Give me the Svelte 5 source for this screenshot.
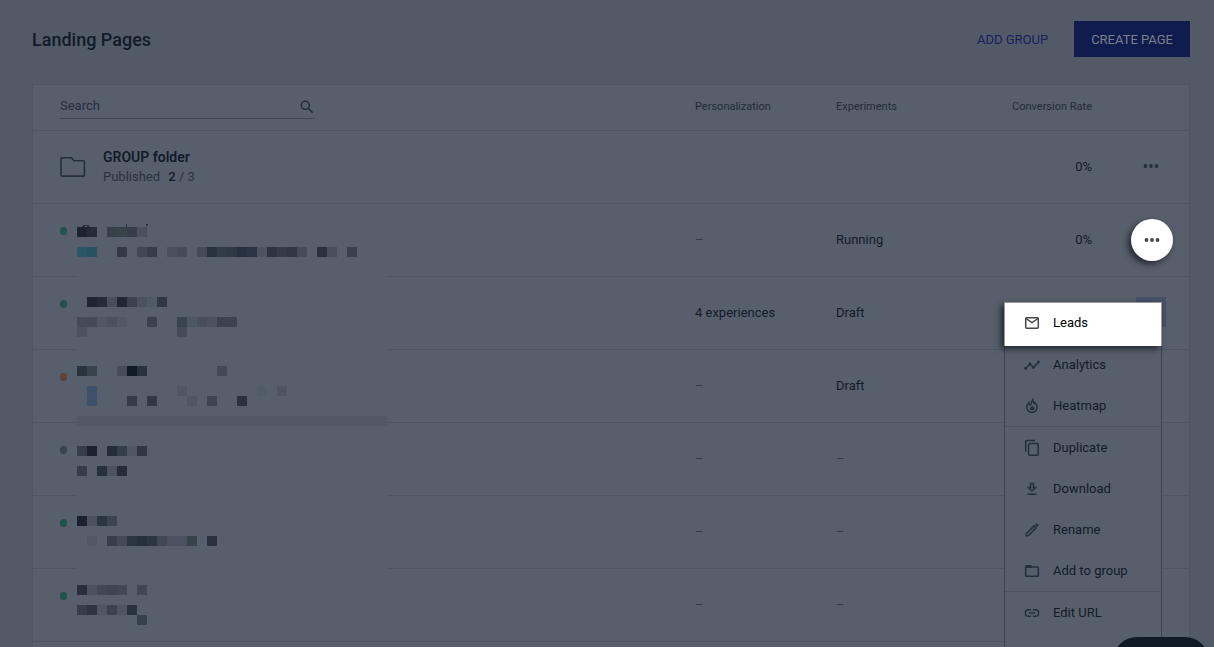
<script>
  let search = $state("");

  const pages = [
    { status: "live", personalization: "–", experiments: "Running", rate: "0%", focus: true },
    { status: "live", personalization: "4 experiences", experiments: "Draft", rate: "", active: true },
    { status: "changed", personalization: "–", experiments: "Draft", rate: "" },
    { status: "draft", personalization: "–", experiments: "–", rate: "" },
    { status: "live", personalization: "–", experiments: "–", rate: "" },
    { status: "live", personalization: "–", experiments: "–", rate: "" },
  ];

  const menu = [
    { icon: "mail", label: "Leads", focus: true },
    { icon: "chart", label: "Analytics" },
    { icon: "flame", label: "Heatmap", last: true },
    { icon: "copy", label: "Duplicate" },
    { icon: "download", label: "Download" },
    { icon: "pencil", label: "Rename" },
    { icon: "folder", label: "Add to group", last: true },
    { icon: "link", label: "Edit URL" },
  ];

  // hidden page names: top of the strip, then column + colour for every block
  const mosaic = [
    [1, "0 1d2431,1 252c38,3 374049,4 38424a,5 353e49,6 4a505d"],
    [21, "0 2d5563,1 275260,4 333947,6 414755,7 363d4b,9 4a505e,10 454b59,12 444b58,13 28323d,14 333a48,15 303745,16 27323e,17 2d3443,18 4d5360,19 2c3341,20 353c49,21 303844,22 454b59,24 2a323f,25 484e5c,27 3a404d"],
    [71, "1 1f2633,2 252c39,3 474f5b,4 202634,5 3b414f,6 4b525e,7 505a66,8 313745"],
    [91, "0 454b59,1 444a58,2 505664,3 4a505e,4 525965,7 3b414f,10 3a424f,11 4c5762,12 484e5c,13 4c5260,14 3c4250,15 3d4351"],
    [101, "0 4c525f,10 454b58"],
    [140, "0 29333e,1 38434c,4 464c59,5 101a25,6 2b323f,14 424855"],
    [160, "1 3f506a,10 505664,18 525c68,20 4e5461"],
    [170, "1 3f506a,5 353b48,7 333845,11 4f5562,13 3e4551,16 2b323f"],
    [220, "0 373e4b,1 1b212f,3 242c39,4 343f4a,5 505664,6 303643"],
    [240, "0 363c49,2 27313c,3 4c525f,4 272c39"],
    [290, "0 1b212f,1 4c5360,2 2a353f,3 3d4451"],
    [310, "1 525965,3 383e4b,4 444b57,5 2c3441,6 26303c,7 2e3542,8 424956,9 4b515e,10 4b515e,11 37424b,13 2b323f"],
    [359, "0 282f3c,1 4b535f,2 424856,3 3f4553,4 424856,6 414855"],
    [379, "0 353e49,1 2d3442,2 4f5563,3 3b424f,4 4e5461,5 2b323f"],
    [389, "6 37414b"],
  ];

  const blocks = mosaic.flatMap(([y, cells]) =>
    cells.split(",").map((cell) => {
      const [col, color] = cell.split(" ");
      return { x: col * 10, y, color: "#" + color };
    })
  );
</script>

{#snippet more(kind)}
  <button class="more {kind}" aria-label="More actions">
    <svg width="16" height="4" viewBox="0 0 16 4">
      <circle cx="2.5" cy="2" r="1.900" />
      <circle cx="8" cy="2" r="1.900" />
      <circle cx="13.5" cy="2" r="1.900" />
    </svg>
  </button>
{/snippet}

<div class="page">
  <header>
    <h1>Landing Pages</h1>
    <button class="flat">ADD GROUP</button>
    <button class="primary">CREATE PAGE</button>
  </header>

  <main class="card">
    <table>
      <colgroup>
        <col />
        <col class="colText" />
        <col class="colText" />
        <col class="colRate" />
        <col class="colMore" />
      </colgroup>
      <thead>
        <tr>
          <th>
            <label class="search">
              <input type="text" placeholder="Search" aria-label="Search" bind:value={search} />
              <svg width="16" height="16" viewBox="0 0 16 16">
                <circle cx="6.3" cy="6.3" r="4" />
                <path d="M9.3 9.3l4.4 4.4" />
              </svg>
            </label>
          </th>
          <th>Personalization</th>
          <th>Experiments</th>
          <th class="rate">Conversion Rate</th>
          <th></th>
        </tr>
      </thead>
      <tbody>
        <tr>
          <td>
            <div class="group">
              <svg width="26" height="22" viewBox="0 0 26 22">
                <path d="M2.200 1.700h9.200l2.600 3h9.200q1.200 0 1.200 1.200v13q0 1.200-1.200 1.200H2.200Q1 20.100 1 18.900v-16q0-1.200 1.200-1.200z" />
              </svg>
              <div>
                <strong>GROUP folder</strong>
                <p>Published <span><b>2</b> / 3</span></p>
              </div>
            </div>
          </td>
          <td></td>
          <td></td>
          <td class="rate">0%</td>
          <td class="actions">{@render more("")}</td>
        </tr>
        {#each pages as page}
          <tr>
            <td class="name"><div class="dot {page.status}"></div></td>
            <td class:empty={page.personalization == "–"}>{page.personalization}</td>
            <td class:empty={page.experiments == "–"}>{page.experiments}</td>
            <td class="rate">{page.rate}</td>
            <td class="actions">
              {#if page.focus}
                {@render more("focus")}
              {:else if page.active}
                {@render more("active")}
              {/if}
            </td>
          </tr>
        {/each}
        <tr>
          <td colspan="5"></td>
        </tr>
      </tbody>
    </table>

    <svg class="mosaic" width="310" height="410" viewBox="0 0 310 410" shape-rendering="crispEdges">
      <rect width="310" height="410" fill="#585f6c" />
      <rect y="190" width="310" height="10" fill="#525866" />
      {#each blocks as block}
        <rect x={block.x} y={block.y} width="10" height="10" fill={block.color} />
      {/each}
      <path d="M5 1q0-2 4-2t4 2h-2q-2-1.500-4 0zM49 -2h1v3h-1zM69 -2h2v2h-2z" fill="#2b323f" />
    </svg>

    <div class="menu">
      {#each menu as item}
        <button class="item" class:focus={item.focus} class:last={item.last}>
          <svg width="18" height="18" viewBox="0 0 18 18">
            {#if item.icon == "mail"}
              <rect x="2.700" y="3.700" width="12.600" height="10.600" rx="1" />
              <path d="M3 4.500l6 4 6-4" />
            {:else if item.icon == "chart"}
              <path d="M2.500 12.500l4.500-4.500 3.500 3.500 5-5.500" />
              <g class="solid">
                <circle cx="2.600" cy="12.400" r="1.400" />
                <circle cx="7" cy="8" r="1.400" />
                <circle cx="10.500" cy="11.500" r="1.400" />
                <circle cx="15.400" cy="6" r="1.400" />
              </g>
            {:else if item.icon == "flame"}
              <path d="M9.800 2.500c.2 2 .9 2.900 1.200 3.500.2.700.8.600 1-.3 1.500 1.500 2.100 3 2.100 4.600a5.100 5.100 0 0 1-10.200 0c0-2 .9-3.500 1.900-4.600.2 1.700.8 2.300 1.500 2.300 1.500 0 .7-3.600 2.500-5.500z" />
              <path class="solid" d="M10.200 7.500c-.2 2-3.700 2-3.200 4.400.5 2 4.300 1.800 4.600-.4.100-1.300-.6-1.300-.4-2.300l-1.500 1.500z" />
            {:else if item.icon == "copy"}
              <path d="M2.700 12.800V2.600q0-1 1-1H12" />
              <rect x="5.600" y="4.600" width="9.600" height="11.700" rx="1" />
            {:else if item.icon == "download"}
              <path d="M7.600 3.400h2.800v4h2.200L9 11 5.400 7.400h2.200zM4.400 14.200h9.200" />
            {:else if item.icon == "pencil"}
              <path d="M3.300 14.700v-2l7.800-7.800 2 2-7.800 7.800z" />
              <path class="solid" d="M12 3.900l1.300-1.300q.5-.4 1 0l1.100 1.100q.4.500 0 1L14.100 6z" />
            {:else if item.icon == "folder"}
              <path d="M2.700 5V4.500q0-.8.800-.8h4l1.400 1.400h5.600q.8 0 .8.800v7.600q0 .8-.8.800h-11q-.8 0-.8-.8zM3 5.200h6" />
            {:else if item.icon == "link"}
              <path d="M8 5.700H5.600a3.300 3.300 0 0 0 0 6.600H8M10 5.700h2.400a3.300 3.300 0 0 1 0 6.600H10M6 9h6" />
            {/if}
          </svg>
          {item.label}
        </button>
      {/each}
    </div>
  </main>

  <button class="chat" aria-label="Chat"></button>
</div>

<style>
  :global(body) {
    background: #535a67;
  }

  .page {
    box-sizing: border-box;
    height: 100vh;
    overflow: hidden;
    padding: 0 24px 0 32px;
    background: #535a67;
    color: #111b28;
    font-family: Roboto, sans-serif;
    font-size: 13px;
  }

  button {
    border: 0;
    padding: 0;
    background: none;
    color: inherit;
    font: inherit;
    cursor: pointer;
  }

  svg {
    fill: none;
    stroke: #252e3c;
  }

  header {
    display: flex;
    align-items: center;
    padding: 21px 0 27px;
  }

  h1 {
    flex: 1;
    margin: 0;
    font-size: 18px;
    font-weight: 500;
  }

  .flat,
  .primary {
    height: 36px;
    padding: 0 17px;
  }

  .flat {
    margin-right: 9px;
    color: #15205f;
  }

  .primary {
    background: #111c4e;
    color: #7a808a;
  }

  .card {
    position: relative;
    border: 1px solid #4e5562;
    background: #585f6c;
  }

  table {
    width: 100%;
    table-layout: fixed;
    border-spacing: 0;
  }

  .colText {
    width: 141px;
  }

  .colRate {
    width: 136px;
  }

  .colMore {
    width: 76px;
  }

  th,
  td {
    box-sizing: border-box;
    height: 73px;
    padding: 0 0 2px;
    border-bottom: 1px solid #4e5562;
    text-align: left;
  }

  th {
    height: 46px;
    color: #222b39;
    font-size: 11px;
    font-weight: 400;
  }

  th:first-child,
  td:first-child {
    padding-left: 27px;
  }

  .rate {
    padding-right: 21px;
    text-align: right;
  }

  .search {
    display: flex;
    box-sizing: border-box;
    width: 255px;
    height: 25px;
    margin-top: -1px;
    border-bottom: 1px solid #3d4553;
  }

  .search input {
    flex: 1;
    min-width: 0;
    padding: 0;
    border: 0;
    outline: 0;
    background: none;
    color: #222b39;
    font: 13px Roboto, sans-serif;
  }

  .search input::placeholder {
    color: #252e3c;
    opacity: 1;
  }

  .search svg {
    margin-top: 5px;
    stroke-width: 1.6;
  }

  .group {
    display: flex;
    align-items: center;
    gap: 17px;
    padding-top: 2px;
  }

  .group svg {
    stroke-width: 1.6;
  }

  .group strong {
    display: block;
    font-size: 14px;
    font-weight: 600;
    line-height: 20px;
  }

  .group p {
    margin: 0;
    color: #28313f;
    line-height: 20px;
  }

  .group span {
    margin-left: 5px;
  }

  .group b {
    color: #111b28;
    font-weight: 500;
  }

  .name {
    padding-top: 23px;
    vertical-align: top;
  }

  .dot {
    width: 7px;
    height: 8px;
    border-radius: 4px;
  }

  .live {
    background: #20534a;
  }

  .changed {
    background: #5f4232;
  }

  .draft {
    background: #37434e;
  }

  .empty {
    color: #303947;
  }

  .actions {
    text-align: center;
  }

  .more {
    display: inline-flex;
    align-items: center;
    justify-content: center;
    width: 30px;
    height: 30px;
    vertical-align: middle;
  }

  .more svg {
    fill: #252e3c;
    stroke: none;
  }

  .more.active {
    background: #475069;
  }

  .more.focus {
    width: 42px;
    height: 42px;
    margin: 2px 0 0 2px;
    border-radius: 50%;
    background: #fff;
    box-shadow: -3px 3px 6px rgba(10, 16, 24, 0.7);
  }

  .more.focus svg {
    fill: #444;
  }

  .mosaic {
    position: absolute;
    top: 141px;
    left: 44px;
    overflow: visible;
    stroke: none;
  }

  .menu {
    position: absolute;
    top: 217px;
    right: 27px;
    box-sizing: border-box;
    width: 158px;
    padding-bottom: 42px;
    border: 1px solid #3b4351;
    background: #585f6c;
  }

  .item {
    display: flex;
    align-items: center;
    gap: 12px;
    width: 100%;
    height: 41px;
    padding-left: 18px;
  }

  .item svg {
    stroke-width: 1.5;
  }

  .item .solid {
    fill: #252e3c;
    stroke: none;
  }

  .item.last {
    box-sizing: border-box;
    height: 42px;
    border-bottom: 1px solid #4b5360;
  }

  .item.focus {
    position: relative;
    box-sizing: border-box;
    width: 158px;
    height: 44px;
    margin: -1px -1px -2px;
    padding-bottom: 4px;
    border: 1px solid #999;
    border-bottom: 0;
    background: #fff;
    box-shadow: -3px 3px 6px rgba(10, 16, 24, 0.7);
    color: #000;
  }

  .item.focus svg {
    stroke: #444;
  }

  .chat {
    position: fixed;
    right: 5px;
    bottom: -38px;
    width: 96px;
    height: 48px;
    border-radius: 24px;
    background: #101a26;
  }
</style>
